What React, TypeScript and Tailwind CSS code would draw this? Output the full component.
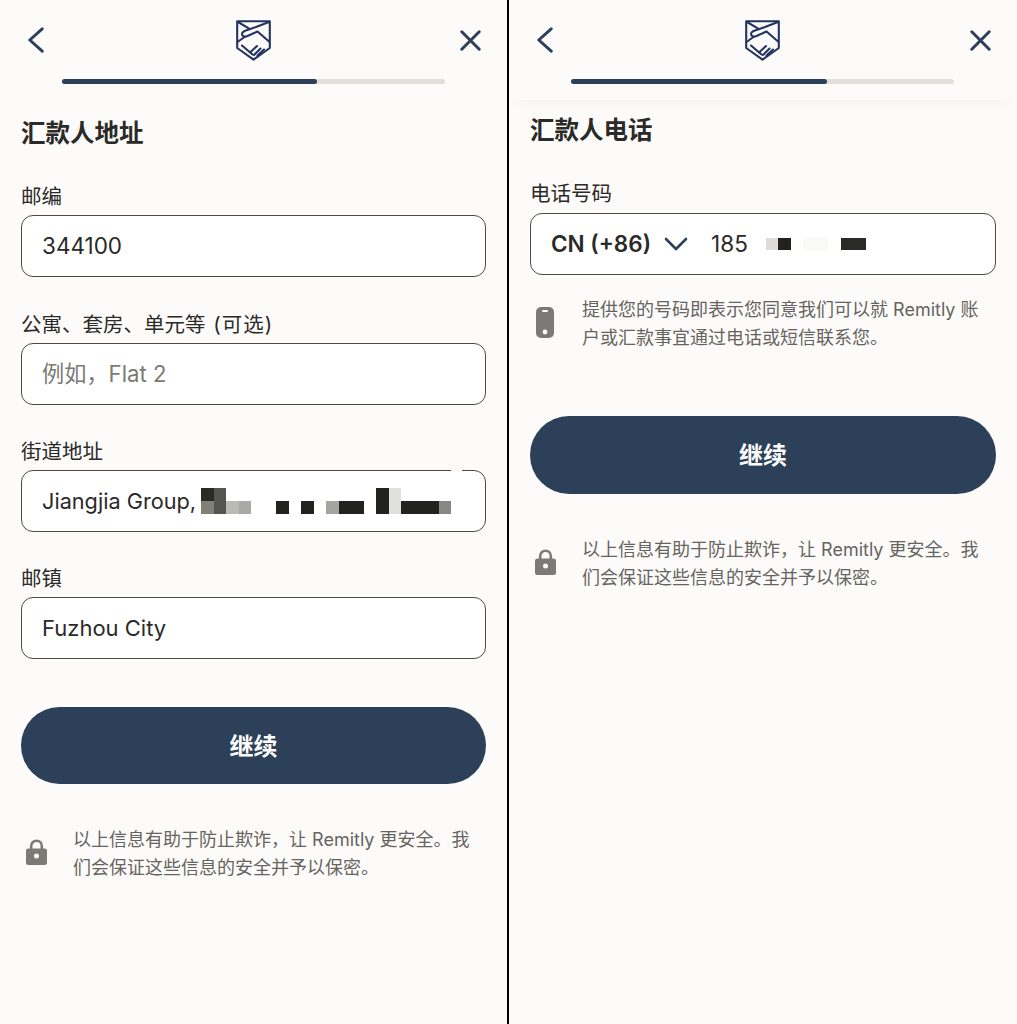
import type { ReactNode } from 'react';

const NAVY = 'bg-[#2c4159]';

function BackIcon() {
  return (
    <svg width="16" height="26" viewBox="0 0 16 26" fill="none" stroke="#2c4159" strokeWidth="3" strokeLinecap="round" strokeLinejoin="round">
      <path d="M14.2 1.8 L1.8 13 L14.2 24.2" />
    </svg>
  );
}

function CloseIcon() {
  return (
    <svg width="21" height="21" viewBox="0 0 21 21" fill="none" stroke="#2c4159" strokeWidth="3" strokeLinecap="round">
      <path d="M1.8 1.8 L19.2 19.2 M19.2 1.8 L1.8 19.2" />
    </svg>
  );
}

function ShieldLogo() {
  return (
    <svg width="35" height="41" viewBox="0 0 35 41" fill="none" stroke="#243461" strokeWidth="2.1" strokeLinejoin="round" strokeLinecap="round" className="mr-[3px]">
      <path d="M1.2 1.2 H33.8 V28 L17.5 39.6 L1.2 28 Z" />
      <path d="M2 2 L14 9.2 M33 2 L20 7 L8.5 11 Q5 13 6.5 15.5 Q8.5 17.5 11.5 16 L21.5 11.5 L33 21.5" />
      <path d="M1.5 22 L8.5 17 M6 25.5 L16.5 34.5 M14 32.5 L21 26 M18 35 L24.5 28.5 M21.5 35.5 L28 29.5" />
    </svg>
  );
}

function LockIcon() {
  return (
    <svg width="21" height="26" viewBox="0 0 21 26" className="mt-[14px] shrink-0">
      <path d="M5.2 11 V7 a5.3 5.3 0 0 1 10.6 0 V11" fill="none" stroke="#7b7a75" strokeWidth="2.6" />
      <rect x="0" y="9.5" width="21" height="16.5" rx="2.5" fill="#7b7a75" />
      <circle cx="10.5" cy="17" r="2.5" fill="#fdfbf9" />
    </svg>
  );
}

function PhoneIcon() {
  return (
    <svg width="18" height="31" viewBox="0 0 18 31" className="mt-[12px] ml-px shrink-0">
      <rect x="0" y="0" width="18" height="31" rx="5" fill="#7b7a75" />
      <rect x="6" y="3" width="6" height="2" rx="1" fill="#fdfbf9" />
      <circle cx="9" cy="25" r="2.4" fill="#fdfbf9" />
    </svg>
  );
}

function Header({ shadow }: { shadow?: boolean }) {
  return (
    <header className={shadow ? 'h-[100px] shadow-[0_6px_10px_-6px_rgba(0,0,0,0.05)]' : 'h-[84px]'}>
      <div className="grid h-[79px] grid-cols-[1fr_auto_1fr] items-center pt-px pl-[28px] pr-[26px]">
        <BackIcon />
        <ShieldLogo />
        <div className="justify-self-end">
          <CloseIcon />
        </div>
      </div>
      <div className={`ml-[62px] h-[5px] rounded-full bg-[#e1dfd9] ${shadow ? 'mr-[63px]' : 'mr-[62px]'}`}>
        <div className={`h-full rounded-full ${NAVY} ${shadow ? 'w-[256px]' : 'w-[255px]'}`} />
      </div>
    </header>
  );
}

function Label({ children }: { children: ReactNode }) {
  return <label className="block pt-[2px] text-[20.5px] leading-[28px] text-[#2a2a28]">{children}</label>;
}

function InputBox({ children }: { children: ReactNode }) {
  return (
    <div className="relative mt-[4px] flex h-[62px] items-center rounded-[12px] border border-[#4a4a46] bg-white pl-5 text-[22px] text-[#2a2a28]">
      {children}
    </div>
  );
}

function Note({ icon, children }: { icon: ReactNode; children: ReactNode }) {
  return (
    <div className="flex items-start">
      <div className="flex w-[52px] shrink-0 pl-[5px]">{icon}</div>
      <p className="pt-px text-[18px] leading-[28px] text-[#65645f]">{children}</p>
    </div>
  );
}

function ContinueButton({ tall }: { tall?: boolean }) {
  return (
    <button className={`flex w-full items-center justify-center rounded-full pt-[2px] text-[24px] font-semibold text-white ${NAVY} ${tall ? 'h-[78px]' : 'h-[77px]'}`}>
      继续
    </button>
  );
}

// mosaic cells over the redacted part of the address
const addressCells = [
  ['bg-[#2b2b26]', 'bg-[#55554f]', '', '', '', '', '', '', '', '', '', '', '', '', 'bg-[#22221e]', 'bg-[#e0e0dc]', '', '', '', '', ''],
  ['bg-[#808079]', 'bg-[#55554f]', 'bg-[#bbbbb6]', 'bg-[#aaaaa5]', '', '', 'bg-[#22221e]', '', 'bg-[#22221e]', '', 'bg-[#a5a5a0]', 'bg-[#22221e]', 'bg-[#22221e]', '', 'bg-[#22221e]', 'bg-[#e0e0dc]', 'bg-[#22221e]', 'bg-[#22221e]', 'bg-[#22221e]', 'bg-[#888883]', ''],
];

const phoneCells = ['bg-[#dddcd8]', 'bg-[#22221e]', '', 'bg-[#f9f9f7]', 'bg-[#f9f9f7]', '', 'bg-[#2a2a26]', 'bg-[#2a2a26]'];

function AddressScreen() {
  return (
    <section className="flex w-[507px] shrink-0 flex-col">
      <Header />
      <div className="px-[21px] pt-[33px]">
        <h2 className="text-[24.5px] leading-[32px] font-semibold text-[#2a2a28]">汇款人地址</h2>
        <div className="mt-[32px]">
          <Label>邮编</Label>
          <InputBox>
            <span className="text-[22.5px]">344100</span>
          </InputBox>
        </div>
        <div className="mt-[32px]">
          <Label>
            公寓、套房、单元等 <span className="ml-[2px] tracking-[1px]">(可选)</span>
          </Label>
          <InputBox>
            <span className="text-[22.2px] text-[#7b7a75]">例如，Flat 2</span>
          </InputBox>
        </div>
        <div className="mt-[31px]">
          <Label>街道地址</Label>
          <InputBox>
            <span className="text-[21.7px]">Jiangjia Group,</span>
            <div className="ml-[5px] grid grid-cols-[repeat(21,12.5px)] grid-rows-[13px_13px]">
              {addressCells.flat().map((cell, i) => (
                <span key={i} className={cell} />
              ))}
            </div>
            <span className="absolute -top-px right-[23px] h-[2px] w-[11px] bg-[#fdfbf9]" />
          </InputBox>
        </div>
        <div className="mt-[31px]">
          <Label>邮镇</Label>
          <InputBox>Fuzhou City</InputBox>
        </div>
        <div className="mt-[48px]">
          <ContinueButton />
        </div>
        <div className="mt-[41px]">
          <Note icon={<LockIcon />}>
            以上信息有助于防止欺诈，让 Remitly 更安全。我
            <br />
            们会保证这些信息的安全并予以保密。
          </Note>
        </div>
      </div>
    </section>
  );
}

function PhoneScreen() {
  return (
    <section className="flex min-w-0 flex-1 flex-col">
      <Header shadow />
      <div className="px-[21px] pt-[14px]">
        <h2 className="text-[24.5px] leading-[32px] font-semibold text-[#2a2a28]">汇款人电话</h2>
        <div className="mt-[32px]">
          <Label>电话号码</Label>
          <div className="mt-[5px]">
            <div className="flex h-[62px] items-center rounded-[12px] border border-[#4a4a46] bg-white pl-5 text-[22.5px] text-[#2a2a28]">
              <span className="font-semibold">CN (+86)</span>
              <svg width="24" height="14" viewBox="0 0 24 14" fill="none" stroke="#2c4159" strokeWidth="2.6" strokeLinecap="round" strokeLinejoin="round" className="ml-[13px]">
                <path d="M2 2 L12 12 L22 2" />
              </svg>
              <span className="ml-[23px]">185</span>
              <div className="ml-[18px] grid grid-cols-[repeat(8,12.5px)] grid-rows-[12px]">
                {phoneCells.map((cell, i) => (
                  <span key={i} className={cell} />
                ))}
              </div>
            </div>
          </div>
        </div>
        <div className="mt-[20px]">
          <Note icon={<PhoneIcon />}>
            提供您的号码即表示您同意我们可以就 Remitly 账
            <br />
            户或汇款事宜通过电话或短信联系您。
          </Note>
        </div>
        <div className="mt-[64px]">
          <ContinueButton tall />
        </div>
        <div className="mt-[41px]">
          <Note icon={<LockIcon />}>
            以上信息有助于防止欺诈，让 Remitly 更安全。我
            <br />
            们会保证这些信息的安全并予以保密。
          </Note>
        </div>
      </div>
    </section>
  );
}

export default function App() {
  return (
    <div className="flex h-[1024px] w-[1017px] overflow-hidden bg-[#fdfbf9] font-['Inter','Noto_Sans_CJK_SC',sans-serif]">
      <AddressScreen />
      <div className="w-[2px] shrink-0 bg-black" />
      <PhoneScreen />
    </div>
  );
}
